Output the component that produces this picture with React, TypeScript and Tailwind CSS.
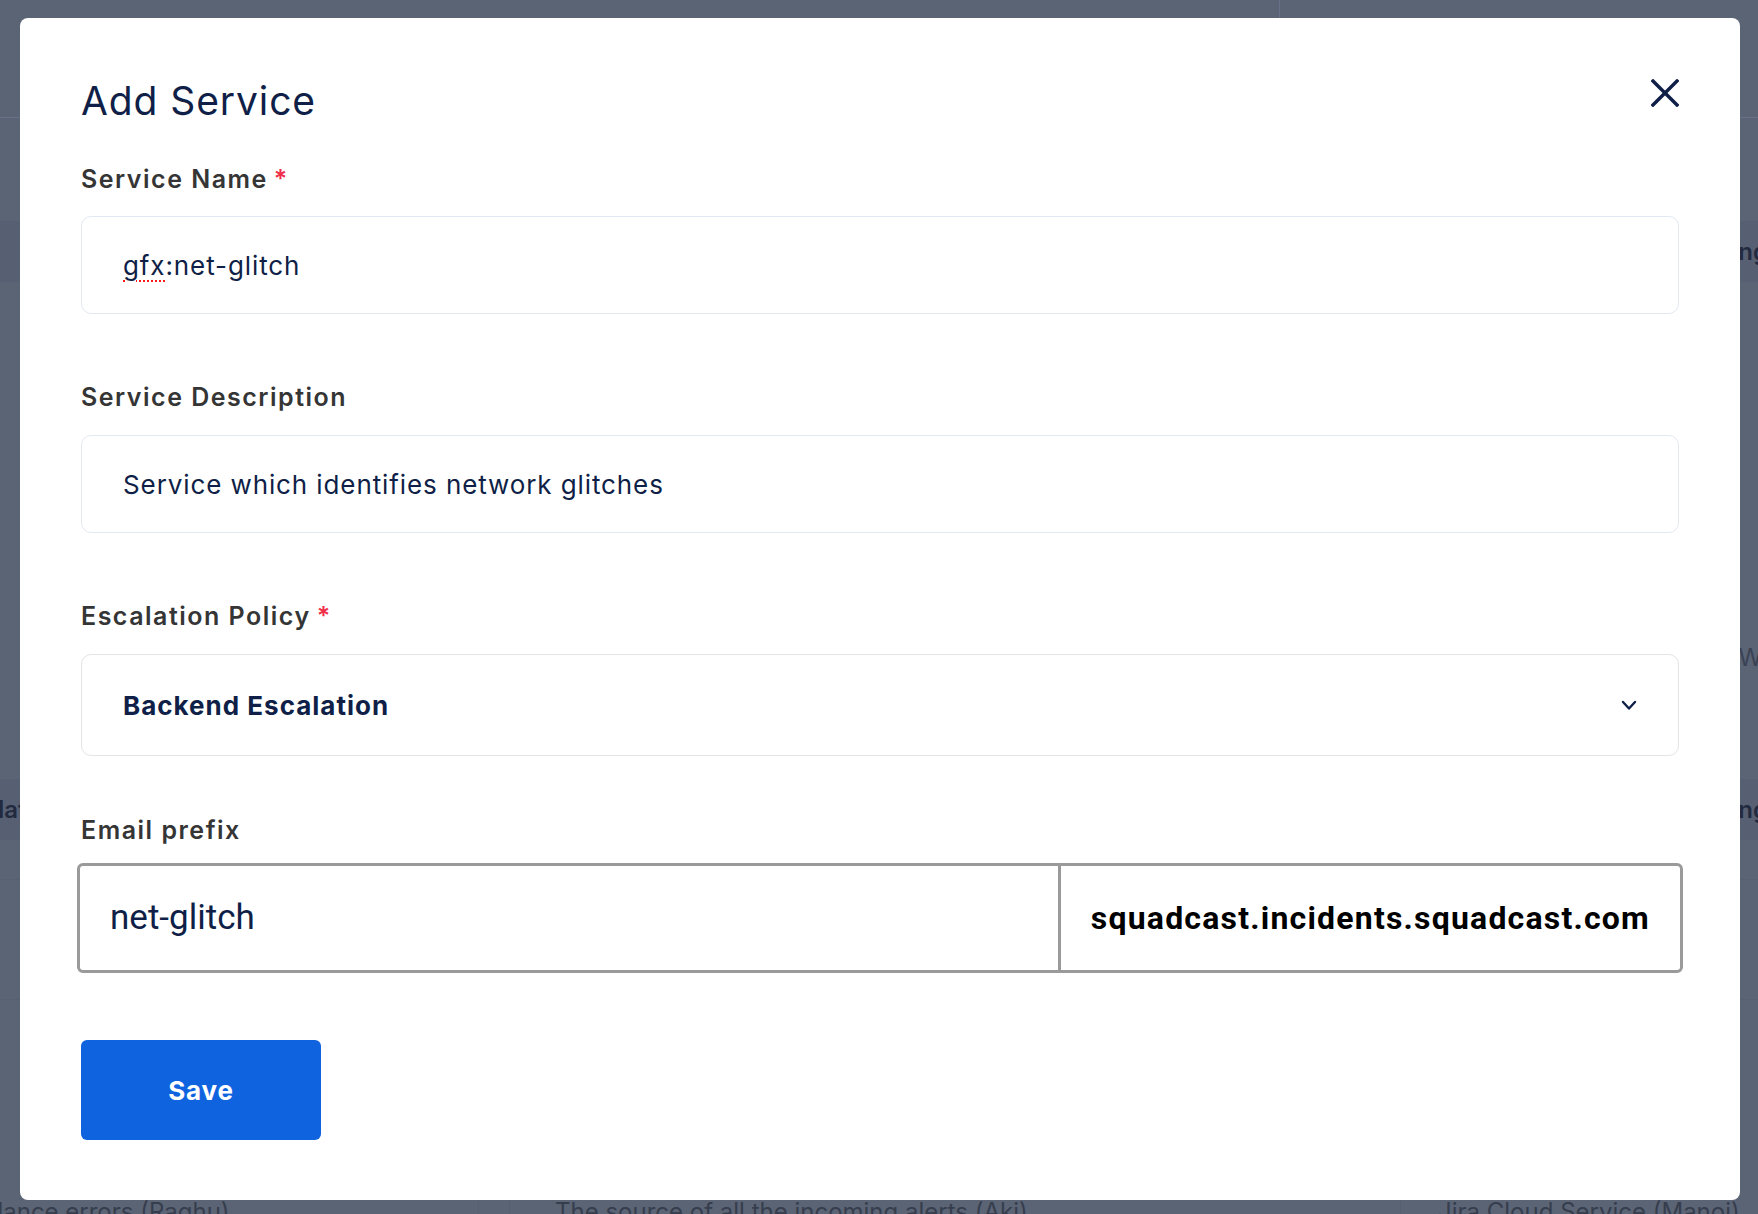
import { useState } from "react";

type LabelProps = {
  label: string;
  required?: boolean;
  className?: string;
};

const Label = ({ label, required, className }: LabelProps) => (
  <div className={`h-[25px] text-[25px] leading-[25px] font-semibold tracking-[1.5px] text-[#353535] whitespace-nowrap ${className ?? ""}`}>
    {label}
    {required && <span className="ml-[6px] text-[#f0304a]">*</span>}
  </div>
);

const CloseIcon = () => (
  <svg width="28" height="28" viewBox="0 0 28 28" fill="none" stroke="#0f1f47" strokeWidth="3.4" strokeLinecap="square">
    <line x1="2" y1="2" x2="26" y2="26" />
    <line x1="26" y1="2" x2="2" y2="26" />
  </svg>
);

const Chevron = () => (
  <svg width="16" height="11" viewBox="0 0 16 11" fill="none" stroke="#0f1f47" strokeWidth="2.4" strokeLinecap="round" strokeLinejoin="round">
    <polyline points="2,2 8,8.5 14,2" />
  </svg>
);

// page behind the overlay, mostly hidden by the modal
const Backdrop = () => (
  <div className="flex flex-col text-[24px] text-[#363d4d] font-['Inter',sans-serif]">
    <div className="flex h-[1198px] flex-col overflow-hidden">
      <div className="flex h-[118px] shrink-0 border-b border-[#66708a]">
        <div className="w-[1280px] border-r border-[#66708a]" />
      </div>
      <div className="h-[104px] shrink-0 border-b border-[#566072]" />
      <div className="flex h-[60px] shrink-0 items-center justify-end border-b border-[#566072] bg-[#576072] font-semibold text-[#222a40]">
        <span className="-mr-[10px]">Pending</span>
      </div>
      <div className="h-[356px] shrink-0" />
      <div className="flex h-[40px] shrink-0 items-center justify-end text-[#3a4254]">
        <span className="-mr-[30px]">Wait</span>
      </div>
      <div className="h-[102px] shrink-0 border-b border-[#566072]" />
      <div className="flex h-[60px] shrink-0 items-center justify-between border-b border-[#566072] bg-[#576072] font-semibold text-[#222a40]">
        <span className="-ml-[2px]">lat</span>
        <span className="-mr-[10px]">Pending</span>
      </div>
      <div className="h-[40px] shrink-0 border-b border-[#566072]" />
      <div className="h-[120px] shrink-0 border-b border-[#566072]" />
    </div>
    <div className="flex h-[16px] whitespace-nowrap leading-[28px]">
      <div className="-ml-[31px] w-[510px] shrink-0 border-r border-[#566072]">balance errors (Raghu)</div>
      <div className="w-[31px] shrink-0 border-r border-[#566072]" />
      <div className="w-[891px] shrink-0 border-r border-[#566072] pl-[45px]">The source of all the incoming alerts (Aki)</div>
      <div className="pl-[37px]">Jira Cloud Service (Manoj)</div>
    </div>
  </div>
);

export default function App() {
  const [prefix] = useState("net-glitch");

  return (
    <div className="relative h-[1214px] w-full overflow-hidden bg-[#5b6475]">
      <Backdrop />

      <div className="absolute left-[20px] top-[18px] flex h-[1182px] w-[1720px] flex-col rounded-[8px] bg-white px-[61px] pt-[61px] font-['Inter',sans-serif]">
        <div className="flex h-[40px] items-start justify-between">
          <h1 className="mt-[2px] text-[39px] leading-[40px] font-normal tracking-[0.9px] text-[#0f1f47]">Add Service</h1>
          <button className="h-[28px] w-[28px]">
            <CloseIcon />
          </button>
        </div>

        <Label label="Service Name" required className="mt-[48px]" />
        <div className="mt-[24px] flex h-[98px] items-center rounded-[10px] border border-[#e3e8f2] pl-[41px] text-[26px] tracking-[0.9px] text-[#0f1f47]">
          <span className="underline decoration-dotted decoration-[#ff1a1a] decoration-2 underline-offset-[6px]">gfx</span>
          :net-glitch
        </div>

        <Label label="Service Description" className="mt-[71px]" />
        <div className="mt-[25px] flex h-[98px] items-center rounded-[10px] border border-[#e3e8f2] pl-[41px] text-[26px] tracking-[0.9px] text-[#0f1f47]">
          Service which identifies network glitches
        </div>

        <Label label="Escalation Policy" required className="mt-[71px]" />
        <div className="mt-[25px] flex h-[102px] items-center justify-between rounded-[10px] border border-[#e4e4e8] pl-[41px] pr-[41px] text-[26px] font-bold tracking-[1px] text-[#0f1f47]">
          <span>Backend Escalation</span>
          <Chevron />
        </div>

        <Label label="Email prefix" className="mt-[62px]" />
        <div className="-mx-[4px] mt-[20px] flex h-[110px] rounded-[6px] border-[3px] border-[#9a9a9a]">
          <div className="flex flex-1 items-center border-r-[3px] border-[#9a9a9a] pl-[30px] font-['Roboto',sans-serif] text-[35px] text-[#0f1f47]">
            {prefix}
          </div>
          <div className="flex items-center px-[30px] font-['Roboto',sans-serif] text-[32px] font-bold tracking-[1.2px] text-black">
            squadcast.incidents.squadcast.com
          </div>
        </div>

        <button className="mt-[67px] h-[100px] w-[240px] rounded-[6px] bg-[#1063df] text-[26px] font-bold tracking-[0.8px] text-white">
          Save
        </button>
      </div>
    </div>
  );
}
